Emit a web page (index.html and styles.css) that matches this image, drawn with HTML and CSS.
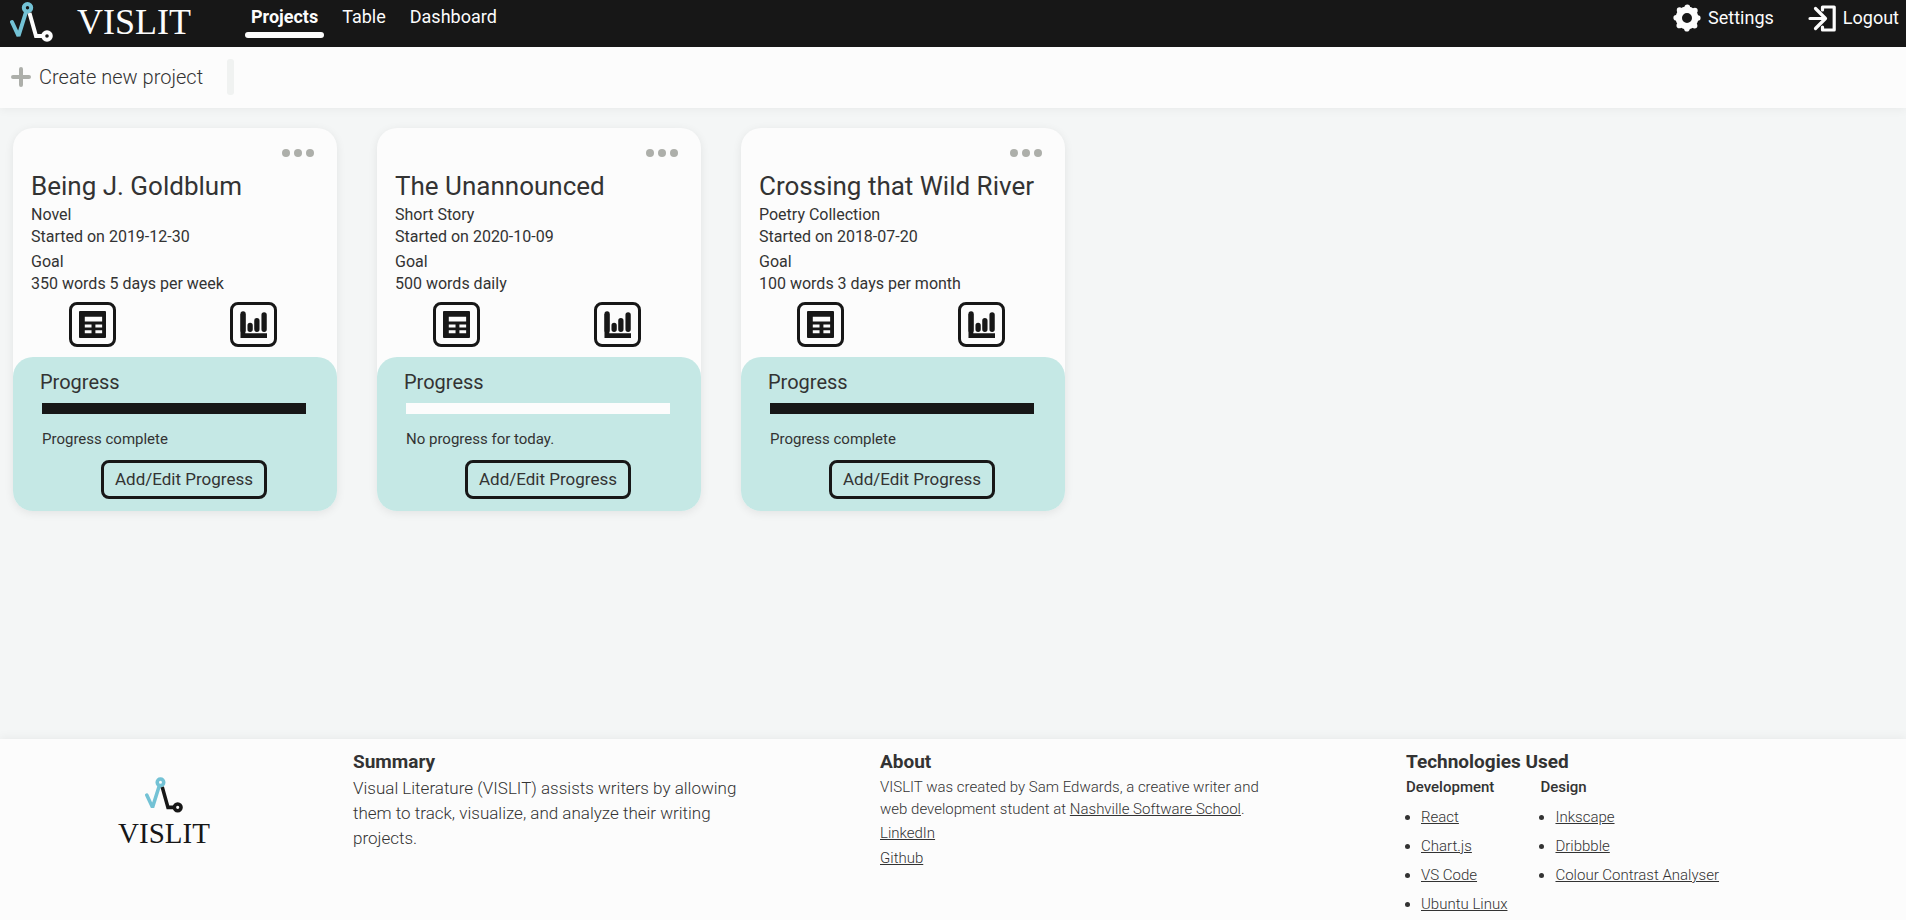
FILE: index.html
```html
<!DOCTYPE html>
<html lang="en">
<head>
<meta charset="utf-8">
<title>VISLIT</title>
<link rel="stylesheet" href="styles.css">
</head>
<body>
<svg class="sprite" aria-hidden="true">
  <symbol id="mark" viewBox="0 0 43 40">
    <g fill="none" stroke-width="4">
      <path class="mark-blue" d="M2 20 8.500 34 16 10" stroke-linecap="round" stroke-linejoin="bevel"/>
      <circle class="mark-blue" cx="17.500" cy="5.700" r="3.700"/>
      <path stroke="currentColor" d="M19.500 11 26 34H34"/>
      <circle stroke="currentColor" cx="37" cy="34" r="3.800"/>
    </g>
  </symbol>
  <symbol id="table" viewBox="0 0 28 28">
    <path fill="currentColor" fill-rule="evenodd" d="M1 0H27a1 1 0 0 1 1 1V27a1 1 0 0 1-1 1H1a1 1 0 0 1-1-1V1a1 1 0 0 1 1-1ZM6 6V11H24V6ZM6 14V17H13V14ZM17 14V17H24V14ZM6 20V23H13V20ZM17 20V23H24V20Z"/>
  </symbol>
  <symbol id="chart" viewBox="0 0 28 28">
    <path fill="none" stroke="currentColor" stroke-width="5" d="M3 3V25.500H28"/>
    <path fill="none" stroke="currentColor" stroke-width="5.500" stroke-linecap="round" d="M3.200 3V20M10.500 15V19M17.500 10V19M25 4V19"/>
  </symbol>
  <symbol id="dots" viewBox="0 0 32 8">
    <g fill="currentColor"><circle cx="4" cy="4" r="4"/><circle cx="16" cy="4" r="4"/><circle cx="28" cy="4" r="4"/></g>
  </symbol>
</svg>

<header class="topbar">
  <a class="brand" href="#"><svg class="brand-mark"><use href="#mark"/></svg><span class="brand-name">VISLIT</span></a>
  <nav class="nav">
    <a class="nav-link active" href="#">Projects</a>
    <a class="nav-link" href="#">Table</a>
    <a class="nav-link" href="#">Dashboard</a>
  </nav>
  <div class="account">
    <button class="account-button" type="button">
      <svg class="account-icon" viewBox="-14 -14 28 28"><g fill="none" stroke="currentColor"><circle r="8.200" stroke-width="6.400"/><circle r="10.800" stroke-width="5.600" stroke-linecap="round" stroke-dasharray="0 8.482"/></g></svg>
      Settings
    </button>
    <button class="account-button" type="button">
      <svg class="account-icon" viewBox="0 0 28 28"><g fill="none" stroke="currentColor" stroke-width="3.200" stroke-linejoin="round" stroke-linecap="round"><path d="M2 14.500H17M7.500 4.500 17.500 14.500 7.500 24.500"/><path d="M14.500 6V3H26.200V26H14.500V23"/></g></svg>
      Logout
    </button>
  </div>
</header>

<div class="toolbar">
  <button class="create" type="button">
    <svg class="create-icon" viewBox="0 0 20 20"><path d="M10 2V18M2 10H18" stroke="currentColor" stroke-width="4" stroke-linecap="round"/></svg>
    Create new project
  </button>
  <span class="divider"></span>
</div>

<main class="projects">
  <article class="card">
    <div class="card-body">
      <button class="more" type="button" aria-label="More options"><svg class="more-icon"><use href="#dots"/></svg></button>
      <h2 class="card-title">Being J. Goldblum</h2>
      <p class="detail">Novel</p>
      <p class="detail">Started on 2019-12-30</p>
      <p class="detail goal">Goal</p>
      <p class="detail">350 words 5 days per week</p>
      <div class="views">
        <button class="view" type="button" aria-label="Table"><svg class="view-icon"><use href="#table"/></svg></button>
        <button class="view" type="button" aria-label="Dashboard"><svg class="view-icon"><use href="#chart"/></svg></button>
      </div>
    </div>
    <section class="progress-panel">
      <h3 class="progress-title">Progress</h3>
      <progress class="meter" max="100" value="100" aria-label="Progress"></progress>
      <p class="progress-note">Progress complete</p>
      <button class="edit" type="button">Add/Edit Progress</button>
    </section>
  </article>
  <article class="card">
    <div class="card-body">
      <button class="more" type="button" aria-label="More options"><svg class="more-icon"><use href="#dots"/></svg></button>
      <h2 class="card-title">The Unannounced</h2>
      <p class="detail">Short Story</p>
      <p class="detail">Started on 2020-10-09</p>
      <p class="detail goal">Goal</p>
      <p class="detail">500 words daily</p>
      <div class="views">
        <button class="view" type="button" aria-label="Table"><svg class="view-icon"><use href="#table"/></svg></button>
        <button class="view" type="button" aria-label="Dashboard"><svg class="view-icon"><use href="#chart"/></svg></button>
      </div>
    </div>
    <section class="progress-panel">
      <h3 class="progress-title">Progress</h3>
      <progress class="meter" max="100" value="0" aria-label="Progress"></progress>
      <p class="progress-note">No progress for today.</p>
      <button class="edit" type="button">Add/Edit Progress</button>
    </section>
  </article>
  <article class="card">
    <div class="card-body">
      <button class="more" type="button" aria-label="More options"><svg class="more-icon"><use href="#dots"/></svg></button>
      <h2 class="card-title">Crossing that Wild River</h2>
      <p class="detail">Poetry Collection</p>
      <p class="detail">Started on 2018-07-20</p>
      <p class="detail goal">Goal</p>
      <p class="detail">100 words 3 days per month</p>
      <div class="views">
        <button class="view" type="button" aria-label="Table"><svg class="view-icon"><use href="#table"/></svg></button>
        <button class="view" type="button" aria-label="Dashboard"><svg class="view-icon"><use href="#chart"/></svg></button>
      </div>
    </div>
    <section class="progress-panel">
      <h3 class="progress-title">Progress</h3>
      <progress class="meter" max="100" value="100" aria-label="Progress"></progress>
      <p class="progress-note">Progress complete</p>
      <button class="edit" type="button">Add/Edit Progress</button>
    </section>
  </article>
</main>

<footer class="footer">
  <div class="footer-brand"><svg class="footer-mark"><use href="#mark"/></svg><span class="footer-name">VISLIT</span></div>
  <section>
    <h2 class="footer-title">Summary</h2>
    <p class="summary">Visual Literature (VISLIT) assists writers by allowing them to track, visualize, and analyze their writing projects.</p>
  </section>
  <section>
    <h2 class="footer-title">About</h2>
    <p class="about">VISLIT was created by Sam Edwards, a creative writer and web development student at <a href="#">Nashville Software School</a>.</p>
    <p class="profile"><a href="#">LinkedIn</a></p>
    <p class="profile"><a href="#">Github</a></p>
  </section>
  <section>
    <h2 class="footer-title">Technologies Used</h2>
    <div class="tech">
      <div>
        <h3 class="tech-title">Development</h3>
        <ul class="tech-list">
          <li><a href="#">React</a></li>
          <li><a href="#">Chart.js</a></li>
          <li><a href="#">VS Code</a></li>
          <li><a href="#">Ubuntu Linux</a></li>
        </ul>
      </div>
      <div>
        <h3 class="tech-title">Design</h3>
        <ul class="tech-list">
          <li><a href="#">Inkscape</a></li>
          <li><a href="#">Dribbble</a></li>
          <li><a href="#">Colour Contrast Analyser</a></li>
        </ul>
      </div>
    </div>
  </section>
</footer>
</body>
</html>
```

FILE: styles.css
```css
:root {
  --ink: #171717;
  --text: #333333;
  --paper: #fcfcfc;
  --muted: #adafaa;
  --aqua: #c5e8e5;
  --blue: #73c2d5;
}

* { box-sizing: border-box; }

body {
  margin: 0;
  min-height: 100vh;
  display: flex;
  flex-direction: column;
  background: #f4f6f6;
  color: var(--text);
  font-family: Roboto, sans-serif;
}

h2, h3, p, ul { margin: 0; padding: 0; }
a { color: inherit; }
svg { display: block; }

button {
  padding: 0;
  border: 0;
  background: none;
  color: inherit;
  font: inherit;
  cursor: pointer;
}

.sprite { display: none; }
.mark-blue { stroke: var(--blue); }

.topbar {
  display: flex;
  align-items: flex-start;
  height: 47px;
  padding: 0 7px 0 10px;
  background: var(--ink);
  color: var(--paper);
}

.brand {
  display: flex;
  gap: 24px;
  margin-right: 54px;
  padding-top: 2px;
  color: inherit;
  text-decoration: none;
}
.brand-mark { width: 43px; height: 40px; }
.brand-name { font: 36px/40px "Liberation Serif", serif; }

.nav { display: flex; gap: 12px; }
.nav-link {
  padding: 7px 6px 5px;
  font-size: 18px;
  line-height: 20px;
  text-decoration: none;
}
.nav-link.active { font-weight: 700; }
.nav-link.active::after {
  content: "";
  display: block;
  height: 6px;
  margin: 5px -6px 0;
  border-radius: 3px;
  background: var(--paper);
}

.account { display: flex; gap: 34px; margin-left: auto; padding-top: 4px; }
.account-button { display: flex; align-items: center; gap: 7px; font-size: 18px; line-height: 28px; }
.account-icon { width: 28px; height: 28px; }

.toolbar {
  display: flex;
  align-items: center;
  gap: 24px;
  height: 61px;
  padding: 0 11px 2px;
  background: var(--paper);
  box-shadow: 0 1px 10px rgba(0, 0, 0, 0.06);
}
.create { display: flex; align-items: center; gap: 8px; font-size: 20px; font-weight: 300; }
.create-icon { width: 20px; height: 20px; color: var(--muted); }
.divider { width: 7px; height: 36px; border-radius: 3px; background: #f0f2f1; }

.projects {
  flex: 1;
  display: flex;
  flex-wrap: wrap;
  align-items: flex-start;
  gap: 40px;
  padding: 20px 13px;
}

.card {
  width: 324px;
  border-radius: 20px;
  background: var(--paper);
  box-shadow: 0 2px 10px rgba(0, 0, 0, 0.08);
}
.card-body { display: flex; flex-direction: column; padding: 20px 18px 10px; }
.more { align-self: flex-end; margin-right: 5px; padding: 1px 0; color: var(--muted); }
.more-icon { width: 32px; height: 8px; }
.card-title { margin: 12px 0 2px; font-size: 26px; font-weight: 400; line-height: 32px; }
.detail { font-size: 16px; line-height: 22px; }
.goal { margin-top: 3px; }
.views { display: flex; justify-content: space-between; margin-top: 7px; padding: 0 42px 0 38px; }
.view { padding: 6px 7px; border: 3px solid var(--ink); border-radius: 8px; color: var(--ink); }
.view-icon { width: 27px; height: 27px; }

.progress-panel {
  display: flex;
  flex-direction: column;
  padding: 12px 27px;
  border-radius: 20px;
  background: var(--aqua);
}
.progress-title { font-size: 20px; font-weight: 400; line-height: 26px; }
.meter {
  appearance: none;
  width: 264px;
  height: 11px;
  margin: 8px 2px 14px;
  border: 0;
  background: var(--paper);
}
.meter::-webkit-progress-bar { background: var(--paper); }
.meter::-webkit-progress-value { background: var(--ink); }
.progress-note { margin-left: 2px; font-size: 15px; line-height: 22px; }
.edit {
  align-self: center;
  margin: 10px 0 0 18px;
  padding: 6px 11px;
  border: 3px solid var(--ink);
  border-radius: 8px;
  font-size: 17px;
  line-height: 21px;
}

.footer {
  display: grid;
  grid-template-columns: 353fr 527fr 526fr 500fr;
  min-height: 181px;
  padding-top: 11px;
  background: var(--paper);
  box-shadow: 0 -1px 10px rgba(0, 0, 0, 0.06);
  font-size: 15px;
  font-weight: 300;
}
.footer-brand {
  display: flex;
  flex-direction: column;
  align-items: center;
  padding: 27px 25px 0 0;
  color: var(--ink);
}
.footer-mark { width: 38px; height: 36px; }
.footer-name { margin-top: 4px; font: 29px/32px "Liberation Serif", serif; }
.footer-title { font-size: 19px; font-weight: 700; line-height: 24px; }
.summary { max-width: 400px; margin-top: 2px; font-size: 17px; line-height: 25px; }
.about { max-width: 400px; margin: 2px 0 1px; line-height: 22px; }
.profile { line-height: 25px; }
.tech { display: flex; gap: 33px; }
.tech-title { margin-top: 2px; font-size: 15px; font-weight: 500; line-height: 22px; }
.tech-list { margin-top: 5px; padding-left: 15px; line-height: 29px; }
```
